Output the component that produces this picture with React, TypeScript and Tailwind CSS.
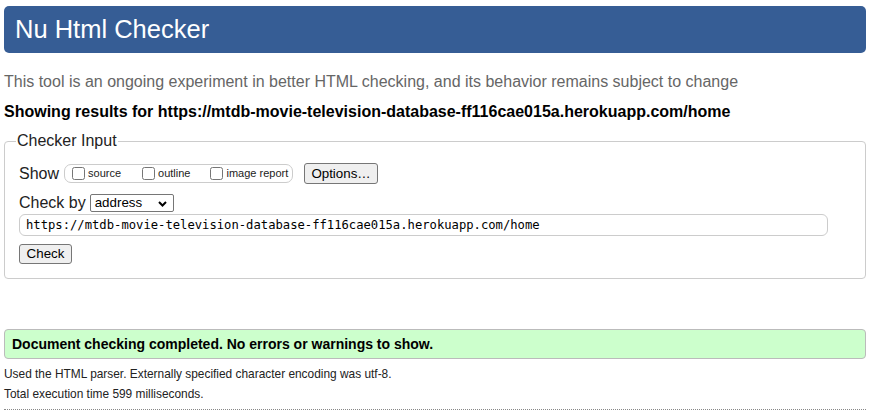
export default function App() {
  const url = 'https://mtdb-movie-television-database-ff116cae015a.herokuapp.com/home';

  return (
    <div className="min-h-[420px] bg-white pl-[4px] pr-[15px] font-['Liberation_Sans',Arial,sans-serif] text-black">
      {/* Title bar */}
      <h1 className="mt-[6px] flex h-[47px] items-center rounded-[5px] bg-[#365d95] pl-[11px] text-[25.5px] font-normal text-white">
        Nu Html Checker
      </h1>

      <p className="mt-[18px] text-[16px] leading-[22px] text-[#666]">
        This tool is an ongoing experiment in better HTML checking, and its behavior remains subject to change
      </p>
      <p className="mt-[8px] text-[16px] leading-[22px] font-bold">Showing results for {url}</p>

      {/* Checker input */}
      <fieldset className="mt-[9px] rounded-[4px] border border-[#cccccc] pr-[12px] pb-[13px] pl-[11px]">
        <legend className="px-[1px] text-[16px] leading-[18px] text-[#222]">Checker Input</legend>

        <div className="pl-[3px]">
          <div className="mt-[13px] flex h-[21px] items-center">
            <span className="text-[16px] text-[#222]">Show</span>
            <div className="ml-[5px] flex h-[19px] w-[229px] items-center rounded-[7px] border border-[#cccccc] pl-[7px]">
              <CheckOption label="source" />
              <span className="w-[21px]" />
              <CheckOption label="outline" />
              <span className="w-[20px]" />
              <CheckOption label="image report" />
            </div>
            <button className="ml-[11px] h-[21px] w-[74px] rounded-[3px] border border-[#767676] bg-[#efefef] text-[13.33px] text-black">
              Options…
            </button>
          </div>

          <div className="mt-[10px] flex h-[18px] items-center">
            <span className="text-[16px] text-[#222]">Check by</span>
            <div className="ml-[4px] flex h-[18px] w-[84px] items-center justify-between rounded-[2px] border border-[#767676] pr-[6px] pl-[4px] text-[13.33px]">
              <span>address</span>
              <svg width="9" height="6" viewBox="0 0 9 6" className="mt-[1px]">
                <path d="M1 1 L4.5 4.5 L8 1" fill="none" stroke="#000" strokeWidth="2" />
              </svg>
            </div>
          </div>

          <div className="mt-[2px] flex h-[22px] w-[809px] items-center rounded-[6px] border border-[#cccccc] pl-[6px] font-['DejaVu_Sans_Mono',monospace] text-[12.2px] text-black">
            {url}
          </div>

          <button className="mt-[8px] h-[20px] w-[53px] rounded-[3px] border border-[#767676] bg-[#efefef] text-[13.33px] leading-none text-black">
            Check
          </button>
        </div>
      </fieldset>

      {/* Result */}
      <div className="mt-[50px] flex h-[30px] items-center rounded-[4px] border border-[#bbbbbb] bg-[#ccffcc] pl-[7px] text-[14px] font-bold text-black">
        Document checking completed. No errors or warnings to show.
      </div>

      <p className="mt-[5px] text-[11.9px] leading-[20px] text-[#222]">
        Used the HTML parser. Externally specified character encoding was utf-8.
      </p>
      <p className="text-[11.9px] leading-[20px] text-[#222]">Total execution time 599 milliseconds.</p>
      <div className="mt-[5px] border-t border-dotted border-[#888]" />
    </div>
  );
}

function CheckOption({ label }: { label: string }) {
  return (
    <label className="flex items-center">
      <input type="checkbox" className="m-0 h-[13px] w-[13px]" />
      <span className="ml-[3px] text-[11px] text-[#222]">{label}</span>
    </label>
  );
}
